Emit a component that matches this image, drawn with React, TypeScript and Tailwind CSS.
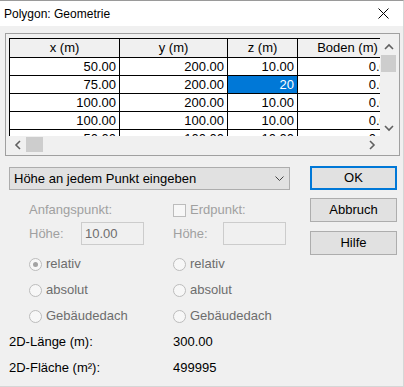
import React from "react";

const font = { fontFamily: '"Liberation Sans", Arial, sans-serif' };

const rows = [
  ["50.00", "200.00", "10.00", "0.00"],
  ["75.00", "200.00", "20", "0.00"],
  ["100.00", "200.00", "10.00", "0.00"],
  ["100.00", "100.00", "10.00", "0.00"],
  ["50.00", "100.00", "10.00", "0.00"],
];

const widths = ["w-[110px]", "w-[108px]", "w-[70px]", "w-[100px]"];

function Chevron({ dir }: { dir: "up" | "down" | "left" | "right" }) {
  const d = {
    up: "M1 6 L5 2 L9 6",
    down: "M1 2 L5 6 L9 2",
    left: "M6 1 L2 5 L6 9",
    right: "M2 1 L6 5 L2 9",
  }[dir];
  const horiz = dir === "left" || dir === "right";
  return (
    <svg width={horiz ? 8 : 10} height={horiz ? 10 : 8} viewBox={horiz ? "0 0 8 10" : "0 0 10 8"}>
      <path d={d} fill="none" stroke="#606060" strokeWidth="1.6" />
    </svg>
  );
}

function Radio({ label, checked }: { label: string; checked?: boolean }) {
  return (
    <div className="flex items-center gap-[4px] h-[18px]">
      <span className="w-[13px] h-[13px] rounded-full border border-[#bcbcbc] bg-[#f7f7f7] flex items-center justify-center">
        {checked && <span className="w-[5px] h-[5px] rounded-full bg-[#a3a3a3]" />}
      </span>
      <span className="text-[13px] text-[#6d6d6d]">{label}</span>
    </div>
  );
}

function Btn({ label, primary }: { label: string; primary?: boolean }) {
  return (
    <div
      className={
        "w-[87px] h-[24px] flex items-center justify-center bg-[#e1e1e1] text-[13px] text-black " +
        (primary ? "border-2 border-[#0078d7]" : "border border-[#adadad]")
      }
    >
      {label}
    </div>
  );
}

export default function App() {
  return (
    <div
      className="w-[404px] h-[387px] bg-[#f0f0f0] border-t border-r border-b border-t-[#9a9a9a] border-r-[#d6d6d6] border-b-[#d6d6d6] flex flex-col"
      style={font}
    >
      {/* Title bar */}
      <div className="h-[25px] bg-white flex items-center justify-between pl-[4px] pr-[14px] shrink-0">
        <span className="text-[12px] text-black">Polygon: Geometrie</span>
        <svg width="11" height="11" viewBox="0 0 11 11">
          <path d="M0.5 0.5 L10.5 10.5 M10.5 0.5 L0.5 10.5" stroke="#000" strokeWidth="1" />
        </svg>
      </div>

      {/* Grid frame */}
      <div className="mt-[7px] ml-[5px] w-[395px] h-[123px] border border-[#a0a0a0] pl-[3px] pt-[4px]">
        <div className="flex w-[388px] h-[115px]">
          <div className="flex flex-col w-[371px]">
            <div className="h-[98px] overflow-hidden bg-white">
              <div className="w-[388px] border-l border-t border-black">
                <div className="flex h-[19px] bg-[#f0f0f0]">
                  {["x (m)", "y (m)", "z (m)", "Boden (m)"].map((h, i) => (
                    <div
                      key={h}
                      className={`${widths[i]} shrink-0 border-r border-b border-black flex items-center justify-center text-[13px] text-black`}
                    >
                      {h}
                    </div>
                  ))}
                </div>
                {rows.map((r, ri) => (
                  <div key={ri} className="flex h-[18px] bg-white">
                    {r.map((c, ci) => {
                      const sel = ri === 1 && ci === 2;
                      return (
                        <div
                          key={ci}
                          className={`${widths[ci]} shrink-0 border-r border-b border-black flex items-center justify-end pr-[3px] text-[13px] ${
                            sel ? "bg-[#0078d7] text-white" : "text-black"
                          }`}
                        >
                          {c}
                        </div>
                      );
                    })}
                  </div>
                ))}
              </div>
            </div>
            {/* horizontal scrollbar */}
            <div className="h-[17px] flex bg-[#f0f0f0]">
              <div className="w-[17px] flex items-center justify-center">
                <Chevron dir="left" />
              </div>
              <div className="w-[17px] bg-[#cdcdcd] my-[1px]" />
              <div className="flex-1" />
              <div className="w-[17px] flex items-center justify-center">
                <Chevron dir="right" />
              </div>
            </div>
          </div>
          {/* vertical scrollbar */}
          <div className="w-[17px] flex flex-col bg-[#f0f0f0]">
            <div className="h-[17px] flex items-center justify-center">
              <Chevron dir="up" />
            </div>
            <div className="h-[17px] bg-[#cdcdcd] mx-[1px]" />
            <div className="flex-1" />
            <div className="h-[17px] flex items-center justify-center">
              <Chevron dir="down" />
            </div>
            <div className="h-[17px]" />
          </div>
        </div>
      </div>

      {/* Lower part */}
      <div className="flex pl-[9px] mt-[11px]">
        <div className="w-[281px] flex flex-col">
          <div className="h-[23px] bg-[#e1e1e1] border border-[#adadad] flex items-center justify-between pl-[4px] pr-[5px]">
            <span className="text-[13px] text-black">Höhe an jedem Punkt eingeben</span>
            <svg width="9" height="6" viewBox="0 0 9 6">
              <path d="M0.5 0.5 L4.5 4.5 L8.5 0.5" fill="none" stroke="#444" strokeWidth="1" />
            </svg>
          </div>

          <div className="pl-[20px] grid grid-cols-[144px_1fr] mt-[11px]">
            <div className="h-[18px] flex items-center text-[13px] text-[#a0a0a0]">Anfangspunkt:</div>
            <div className="h-[18px] flex items-center gap-[4px]">
              <span className="w-[13px] h-[13px] border border-[#bcbcbc] bg-[#f7f7f7]" />
              <span className="text-[13px] text-[#a0a0a0]">Erdpunkt:</span>
            </div>

            <div className="h-[23px] mt-[3px] flex items-center">
              <span className="w-[52px] text-[13px] text-[#a0a0a0]">Höhe:</span>
              <div className="w-[63px] h-[23px] border border-[#cccccc] flex items-center pl-[3px] text-[13px] text-[#6d6d6d]">
                10.00
              </div>
            </div>
            <div className="h-[23px] mt-[3px] flex items-center">
              <span className="w-[50px] text-[13px] text-[#a0a0a0]">Höhe:</span>
              <div className="w-[63px] h-[23px] border border-[#cccccc]" />
            </div>

            <div className="mt-[10px]">
              <Radio label="relativ" checked />
            </div>
            <div className="mt-[10px]">
              <Radio label="relativ" />
            </div>
            <div className="mt-[8px]">
              <Radio label="absolut" />
            </div>
            <div className="mt-[8px]">
              <Radio label="absolut" />
            </div>
            <div className="mt-[8px]">
              <Radio label="Gebäudedach" />
            </div>
            <div className="mt-[8px]">
              <Radio label="Gebäudedach" />
            </div>
          </div>

          <div className="grid grid-cols-[164px_1fr] text-[13px] text-black">
            <div className="h-[18px] mt-[8px] flex items-center">2D-Länge (m):</div>
            <div className="h-[18px] mt-[8px] flex items-center">300.00</div>
            <div className="h-[18px] mt-[8px] flex items-center">2D-Fläche (m²):</div>
            <div className="h-[18px] mt-[8px] flex items-center">499995</div>
          </div>
        </div>

        <div className="ml-[20px] flex flex-col gap-[8px] -mt-[1px]">
          <Btn label="OK" primary />
          <Btn label="Abbruch" />
          <div className="mt-[1px]">
            <Btn label="Hilfe" />
          </div>
        </div>
      </div>
    </div>
  );
}
